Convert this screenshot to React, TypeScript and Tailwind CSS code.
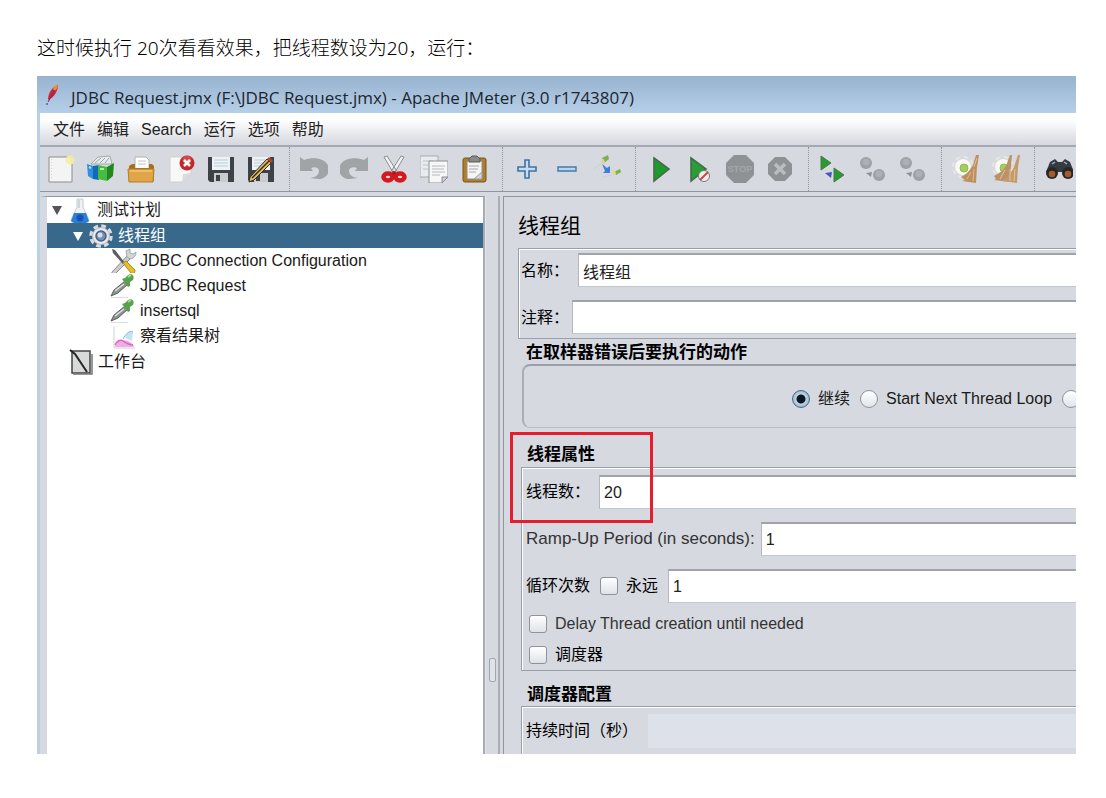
import React, { useState } from "react";
import clsx from "clsx";

const FIELD =
  "h-[34px] min-w-0 flex-1 border-t-2 border-l border-b border-t-[#a0a4aa] border-l-[#b4b8be] border-b-[#c3c7ce] bg-white text-base text-[#222] outline-none";
const CHECKBOX =
  "size-[18px] shrink-0 appearance-none rounded-[3px] border border-[#8d929c] bg-linear-to-b from-white to-[#dfe2e8] checked:to-[#7ea4bf]";
const RADIO =
  "size-[18px] shrink-0 appearance-none rounded-full border border-[#8d929c] bg-linear-to-b from-white to-[#e1e4ea] checked:border-[#4d6a82] checked:bg-[radial-gradient(circle,#0d1720_0_4px,#c3d6e6_5px,#8fb0c9_9px)]";

const Icon = ({ children }: { children: React.ReactNode }) => (
  <svg viewBox="0 0 28 28" className="size-7" aria-hidden="true">
    {children}
  </svg>
);

const Floppy = () => (
  <>
    <path d="M1 2h26v25H3l-2-2z" fill="#3e4248" />
    <path d="M5 2h18v13H5z" fill="#eef3f6" />
    <path d="M7 5h14M7 8h14M7 11h14" stroke="#b9ccd8" strokeWidth="1.2" />
    <path d="M7 18h14v9H7z" fill="#c9cccf" />
    <path d="M9 20h4v6H9z" fill="#3e4248" />
  </>
);

const Dots = () => (
  <>
    <circle cx="7" cy="8" r="6" fill="#9da0a4" />
    <circle cx="20" cy="20" r="6" fill="#9da0a4" />
    <circle cx="7" cy="7" r="3.5" fill="#acafb3" />
    <circle cx="20" cy="19" r="3.5" fill="#acafb3" />
    <path d="M7 18l6-1-1 5z" fill="#8f9296" />
  </>
);

const CogShape = () => (
  <>
    <circle cx="11" cy="12" r="9.5" fill="none" stroke="#e3e6e2" strokeWidth="3.5" strokeDasharray="4.4 3.06" />
    <circle cx="11" cy="12" r="8.5" fill="#f8f9f7" stroke="#d3d6d2" />
    <circle cx="12" cy="13" r="4" fill="#a5cf5d" stroke="#8fba57" />
  </>
);

const toolGroups = [
  [
    {
      name: "New",
      art: (
        <>
          <path d="M2 2h23v25H2z" fill="#f4f4f4" stroke="#8b8d90" />
          <path d="M4.5 4v21" stroke="#d5d5d5" strokeDasharray="1 2" />
          <circle cx="23" cy="5" r="4.5" fill="#f5efa0" opacity=".9" />
        </>
      ),
    },
    {
      name: "Templates",
      art: (
        <>
          <path d="M4 9l7-7 12-1 2 8z" fill="#e6ecec" stroke="#a2aaad" />
          <path d="M8 8l6-5M13 8l5-5M18 8l4-5" stroke="#98a4a8" />
          <path d="M0 9l6 2v13l-5-3z" fill="#2f8fe0" />
          <path d="M6 11l6-1v15l-6-1z" fill="#1768b4" />
          <path d="M11 10l9 2v14l-9-2z" fill="#45bd3f" />
          <path d="M20 12l7-4-1 13-6 5z" fill="#23871f" />
          <path d="M13 14h4M2 12l2 1" stroke="#b7efaa" strokeWidth="2" />
        </>
      ),
    },
    {
      name: "Open",
      art: (
        <>
          <path d="M8 2h11l3 3v11H8z" fill="#fff" stroke="#b0b0b0" />
          <path d="M11 6h8M11 9h8" stroke="#c4c4c4" />
          <path d="M2 11l3-2h3v4h14V9h3l2 2v15H2z" fill="#a8701e" />
          <path d="M1 14h26l-1 13H2z" fill="#e0a546" stroke="#b67c26" />
          <path d="M3 16h22" stroke="#f2c878" strokeWidth="1.5" />
        </>
      ),
    },
    {
      name: "Close",
      art: (
        <>
          <path d="M3 2h21v16l-9 9H3z" fill="#f8f8f8" stroke="#d0d0d0" />
          <path d="M15 27l1-8 8-1z" fill="#dcdcdc" />
          <circle cx="20" cy="8" r="7.5" fill="#c3262b" />
          <circle cx="20" cy="5" r="4.5" fill="#e0605f" opacity=".6" />
          <path d="M17 5l6 6M23 5l-6 6" stroke="#fff" strokeWidth="2.5" />
        </>
      ),
    },
    { name: "Save", art: <Floppy /> },
    {
      name: "Save As",
      art: (
        <>
          <Floppy />
          <path d="M3 22L20 4l4 4L7 25l-5 2z" fill="#e2bb62" stroke="#332d22" />
          <path d="M5 23L22 6" stroke="#2c2c2c" strokeWidth="1.5" />
          <path d="M20 4l2-2 4 4-2 2z" fill="#b5432d" />
        </>
      ),
    },
  ],
  [
    {
      name: "Undo",
      art: (
        <path d="M0 2l4 3c11-4 24-1 25 9 0 6-5 10-10 10l-9-1c7-1 9-4 9-7s-4-5-8-3l2 3H0z" fill="#a1a4a6" />
      ),
    },
    {
      name: "Redo",
      art: (
        <path d="M28 2l-4 3C13 1 0 4-1 14c0 6 5 10 10 10l9-1c-7-1-9-4-9-7s4-5 8-3l-2 3h13z" fill="#a1a4a6" />
      ),
    },
    {
      name: "Cut",
      art: (
        <>
          <path d="M4 2l3-1 11 17-4 1zM24 2l-3-1-11 17 4 1z" fill="#f1f1f1" stroke="#8c8f90" />
          <ellipse cx="8" cy="22" rx="4.5" ry="3.4" fill="none" stroke="#d3191f" strokeWidth="4.5" />
          <ellipse cx="20" cy="22" rx="4.5" ry="3.4" fill="none" stroke="#d3191f" strokeWidth="4.5" />
          <circle cx="14" cy="18" r="2" fill="#b21519" />
        </>
      ),
    },
    {
      name: "Copy",
      art: (
        <>
          <path d="M0 1h18v21H0z" fill="#e8ecf0" stroke="#a4abb2" />
          <path d="M3 6h10M3 10h5M3 14h5" stroke="#bcc2c8" />
          <path d="M9 6h19v16l-6 6H9z" fill="#f7f7f7" stroke="#8a8e92" />
          <path d="M12 11h13M12 14h12M12 17h13M12 20h8" stroke="#b5b8bb" />
          <path d="M22 28v-6h6z" fill="#cfd1d2" stroke="#8a8e92" />
        </>
      ),
    },
    {
      name: "Paste",
      art: (
        <>
          <rect x="3" y="3" width="23" height="24" rx="2" fill="#b07d2c" stroke="#7b551a" />
          <path d="M7 6h15v18H7z" fill="#f5f5f5" stroke="#8e8e8a" />
          <path d="M9 11h10M9 14h9M9 17h7" stroke="#aaa" />
          <path d="M14 24l8-7v7z" fill="#d5d5d5" stroke="#9b9b9b" />
          <path d="M9 4l3-3h5l3 3v3H9z" fill="#888b83" stroke="#585a54" />
        </>
      ),
    },
  ],
  [
    {
      name: "Expand All",
      art: <path d="M12 5h4v7h7v4h-7v7h-4v-7H5v-4h7z" fill="#c5dcf6" stroke="#41719f" strokeWidth="1.6" />,
    },
    {
      name: "Collapse All",
      art: <path d="M5 12h18v4H5z" fill="#b9d5f4" stroke="#4678a8" strokeWidth="1.4" />,
    },
    {
      name: "Toggle",
      art: (
        <>
          <path d="M1 14l8-6M9 22l10-2" stroke="#cdd0cf" />
          <path d="M9 3l6-3 1 4-5 4z" fill="#7fae4c" />
          <path d="M8 5l3-1 1 4-3 1z" fill="#d8d6a0" />
          <path d="M9 9l5 4 3-2v7h-7l2-2z" fill="#3d7fd6" />
          <path d="M21 17l6-3 1 3-5 3z" fill="#7fae4c" />
          <path d="M19 16l3-1 1 4-3 1z" fill="#e2d98a" />
        </>
      ),
    },
  ],
  [
    { name: "Start", art: <path d="M8 3l15 11L8 26z" fill="#1f9a2c" stroke="#476b4a" strokeWidth="1.6" /> },
    {
      name: "Start no pauses",
      art: (
        <>
          <path d="M5 3l15 11L5 26z" fill="#2a9e36" stroke="#476b4a" strokeWidth="1.6" />
          <circle cx="18" cy="21" r="5.5" fill="#f1eeee" stroke="#707c78" />
          <path d="M14 25l8-8" stroke="#d04444" strokeWidth="2" />
        </>
      ),
    },
    {
      name: "Stop",
      art: (
        <>
          <path d="M8 0h12l8 8v12l-8 8H8l-8-8V8z" fill="#8f9295" />
          <text x="14" y="17" textAnchor="middle" fontSize="9" fontWeight="700" fill="#a4a7aa">
            STOP
          </text>
        </>
      ),
    },
    {
      name: "Shutdown",
      art: (
        <>
          <path d="M9 2h10l7 7v10l-7 7H9l-7-7V9z" fill="#8f9295" />
          <path d="M9 9l10 10M19 9L9 19" stroke="#babdbf" strokeWidth="3.5" />
        </>
      ),
    },
  ],
  [
    {
      name: "Remote Start All",
      art: (
        <>
          <path d="M2 1l10 7-10 7zM15 13l10 7-10 7z" fill="#259c31" stroke="#4f7452" />
          <path d="M6 18l7-1-1 6z" fill="#4654c4" />
        </>
      ),
    },
    { name: "Remote Stop All", art: <Dots /> },
    { name: "Remote Shutdown All", art: <Dots /> },
  ],
  [
    {
      name: "Clear",
      art: (
        <>
          <CogShape />
          <path d="M24 0l3 0-2 12-1 16-14-2 3-1-4-3c6-3 9-7 12-12z" fill="#bf905f" />
          <path d="M22 14l-1 12M19 17l-4 7M25 3l-3 9" stroke="#dfbd92" />
        </>
      ),
    },
    {
      name: "Clear All",
      art: (
        <>
          <CogShape />
          <path d="M18 0l2 0-1 11-1 16-16-2 2-1-2-3c6-3 9-6 12-10z" fill="#bd9167" />
          <path d="M26 0l2 0-2 12-1 16-14-2c5-4 8-8 11-14z" fill="#c39a6b" />
          <path d="M13 15l-5 9M18 14v12M23 14l-1 12" stroke="#e0c49f" />
        </>
      ),
    },
  ],
  [
    {
      name: "Search",
      art: (
        <>
          <path d="M5 7l5-3 3 3h4l3-3 5 3 4 10H1z" fill="#363b41" />
          <circle cx="7" cy="18" r="6" fill="#24282c" />
          <circle cx="23" cy="18" r="6" fill="#24282c" />
          <circle cx="7" cy="19" r="3.3" fill="#a95a24" />
          <circle cx="23" cy="19" r="3.3" fill="#a95a24" />
          <path d="M7 9l3-2M19 7l3 2" stroke="#a9b1b9" strokeWidth="1.5" />
        </>
      ),
    },
  ],
];

const Pipette = () => (
  <Icon>
    <path d="M2 26h17" stroke="#d2d2d2" strokeWidth="1.5" />
    <path d="M2 24l3-6 11-9 3 3-10 9z" fill="#8d9190" stroke="#5c605f" />
    <path d="M6 19l9-7" stroke="#e0e4e4" strokeWidth="1.5" />
    <path d="M13 7l3-1 3-3c4-2 7 1 5 5l-3 2v4l-2 1z" fill="#58a14d" />
    <path d="M19 5l3-2" stroke="#a6dc96" strokeWidth="2" />
  </Icon>
);

const treeItems = [
  {
    label: "测试计划",
    row: "h-[26px] pl-[5px]",
    arrow: true,
    icon: (
      <Icon>
        <path d="M11 3h6v8l6 13q0 3-3 3H8q-3 0-3-3l6-13z" fill="#eef2f5" stroke="#c6ccd1" />
        <path d="M8 17h12l3 8-3 2H8l-3-2z" fill="#2b7fdb" />
        <circle cx="14" cy="22" r="3.5" fill="#1553b4" />
        <path d="M13 4v8" stroke="#aeb8c1" />
      </Icon>
    ),
  },
  {
    label: "线程组",
    row: "h-[25px] pl-[26px]",
    arrow: true,
    icon: (
      <Icon>
        <circle cx="14" cy="14" r="9.5" fill="none" stroke="#d9dcdf" strokeWidth="4.5" strokeDasharray="4.4 3.06" />
        <circle cx="14" cy="14" r="8.5" fill="#e8eaec" stroke="#b4b8bb" />
        <circle cx="14" cy="14" r="5" fill="#7590b5" stroke="#48607f" strokeWidth="1.5" />
        <circle cx="13" cy="13" r="2.5" fill="#cfe0f2" />
      </Icon>
    ),
  },
  {
    label: "JDBC Connection Configuration",
    row: "h-[25px] pl-[62px]",
    icon: (
      <Icon>
        <path d="M3 25L19 8l3 3L6 27q-4 1-3-2z" fill="#c9cccd" stroke="#8c9092" />
        <path d="M18 10l-1-6 4-2 0 4 3 1 3-2q0 6-6 7z" fill="#d3d6d7" stroke="#a5a8aa" />
        <path d="M3 2l3 1 10 13-2 1L4 6z" fill="#5b5f61" />
        <path d="M14 16l3-2 9 9q0 5-4 3z" fill="#e7bc2b" stroke="#b28b17" />
      </Icon>
    ),
  },
  { label: "JDBC Request", row: "h-[25px] pl-[62px]", icon: <Pipette /> },
  { label: "insertsql", row: "h-[25px] pl-[62px]", icon: <Pipette /> },
  {
    label: "察看结果树",
    row: "h-[26px] pl-[62px]",
    icon: (
      <Icon>
        <path d="M5 4v22h21" fill="none" stroke="#d5cfd7" />
        <path d="M6 25c1-5 4-8 8-7s5 0 7 2 4 3 4 5z" fill="#f0aee4" />
        <path d="M6 23c2-4 5-6 8-4s5 4 10 4" fill="none" stroke="#d968ca" strokeWidth="1.5" />
        <path d="M16 16c1-5 4-7 8-6l-1 9z" fill="#c5e1f6" />
        <path d="M14 17c3-5 6-9 10-7" fill="none" stroke="#86b1dc" />
      </Icon>
    ),
  },
  {
    label: "工作台",
    row: "h-[26px] pl-5",
    icon: (
      <Icon>
        <path d="M5 3h18v22H5z" fill="#d8dad9" stroke="#444" strokeWidth="1.5" />
        <path d="M6 26h19V6" fill="none" stroke="#777" strokeWidth="1.5" />
        <path d="M3 2l5 4 12 18" fill="none" stroke="#262626" strokeWidth="2" />
      </Icon>
    ),
  },
];

const menus = ["文件", "编辑", "Search", "运行", "选项", "帮助"];

export default function App() {
  const [selected, setSelected] = useState("线程组");

  return (
    <main className="min-h-screen bg-white pt-[34px] pr-[30px] pb-11 pl-[37px] font-['Liberation_Sans','Noto_Sans_CJK_SC',sans-serif] text-base text-black">
      <p className="mb-3.5 font-['Noto_Sans','Noto_Sans_CJK_SC',sans-serif] text-[19px] leading-7 font-light">
        这时候执行 20次看看效果，把线程数设为20，运行：
      </p>

      <div className="overflow-hidden bg-[#d6d9e0]">
        {/* Title bar */}
        <header className="flex h-[37px] items-center gap-2 bg-linear-to-b from-[#98b3cf] to-[#b6cfe9] pt-1.5 pl-1 font-['Open_Sans','Noto_Sans',sans-serif] text-[17px] whitespace-nowrap text-[#1c2630]">
          <svg viewBox="0 0 22 24" className="-mt-1.5 h-6 w-[22px] shrink-0" aria-hidden="true">
            <path d="M7 17C7 10 11 4 17 2c0 6-4 12-8 14z" fill="#cf2336" />
            <path d="M12 6c2-3 3-4 5-5 0 3-1 5-3 7z" fill="#ee8a3a" />
            <path d="M7 19l7-12" stroke="#713068" />
            <circle cx="6" cy="21" r="1" fill="#54658c" />
          </svg>
          <span>JDBC Request.jmx (F:\JDBC Request.jmx) - Apache JMeter (3.0 r1743807)</span>
        </header>

        <div className="border-l-3 border-[#b9d0e6]">
          {/* Menu */}
          <nav className="flex h-8 items-center gap-3 bg-linear-to-b from-white from-20% to-[#d5d8de] pt-px pl-[13px] text-[#222]">
            {menus.map((menu) => (
              <button key={menu} type="button">
                {menu}
              </button>
            ))}
          </nav>

          {/* Toolbar */}
          <div className="flex h-[47px] items-center overflow-hidden border-t-2 border-b border-t-[#a5a9b3] border-b-[#8f949e] pl-px" role="toolbar">
            {toolGroups.map((group, index) => (
              <div key={index} className="flex h-full shrink-0 items-center">
                {index > 0 && <span className="mr-1 ml-2 h-full border-l border-dotted border-[#8f949e]" />}
                {group.map((tool) => (
                  <button key={tool.name} type="button" aria-label={tool.name} className="flex w-10 justify-center">
                    <Icon>{tool.art}</Icon>
                  </button>
                ))}
              </div>
            ))}
          </div>

          <div className="flex pt-1">
            {/* Test plan tree */}
            <ul className="w-[445px] shrink-0 border-t border-r-2 border-l-7 border-t-[#9297a1] border-r-[#a7abb5] border-l-[#d6d9e0] bg-white">
              {treeItems.map((item) => (
                <li key={item.label}>
                  <button
                    type="button"
                    onClick={() => setSelected(item.label)}
                    className={clsx(
                      "flex w-full items-center overflow-hidden text-left whitespace-nowrap",
                      item.row,
                      selected === item.label ? "bg-[#39698a] text-white" : "text-[#1a1a1a]"
                    )}
                  >
                    {item.arrow && (
                      <svg viewBox="0 0 10 10" className="mr-1 size-2.5 shrink-0" aria-hidden="true">
                        <path d="M0 1h10L5 10z" fill={selected === item.label ? "#fff" : "#555"} />
                      </svg>
                    )}
                    <span className="mr-[3px] shrink-0">{item.icon}</span>
                    {item.label}
                  </button>
                </li>
              ))}
            </ul>

            {/* Splitter */}
            <div className="flex w-[15px] shrink-0 items-end justify-center border-r-2 border-l border-r-[#a9adb6] border-l-[#e4e6eb] pb-[72px]">
              <span className="h-6 w-[7px] rounded-xs border border-[#a0a5af] bg-[#dfe2e8]" />
            </div>

            {/* Thread group settings */}
            <div className="ml-[3px] min-w-0 flex-1 border-t border-l border-[#8f949e] pl-3.5 whitespace-nowrap">
              <h1 className="flex h-[51px] items-center pt-1.5 text-[21px] leading-none">线程组</h1>

              <div className="flex flex-col gap-[13px] border-t border-b border-l border-[#9a9faa] py-1 pl-0.5 shadow-[inset_1px_1px_0_#fff]">
                <div className="flex items-center">
                  <label htmlFor="group-name" className="mr-[9px] pt-0.5">名称：</label>
                  <input id="group-name" defaultValue="线程组" className={clsx(FIELD, "pl-1")} />
                </div>
                <div className="flex items-center">
                  <label htmlFor="group-comment" className="mr-[3px] pt-0.5">注释：</label>
                  <input id="group-comment" className={clsx(FIELD, "pl-1")} />
                </div>
              </div>

              <section className="pl-1">
                <h2 className="flex h-[25px] items-center pt-0.5 pl-1 text-[17px] font-bold">在取样器错误后要执行的动作</h2>
                <div className="flex h-16 items-center overflow-hidden rounded-l-lg border-t-2 border-b border-l-2 border-t-[#9a9faa] border-b-[#b9bdc6] border-l-[#a9adb7] pt-1 pl-[268px] text-[#1a1a1a]">
                  <label className="mr-2.5 flex shrink-0 items-center gap-2">
                    <input type="radio" name="on-error" defaultChecked className={RADIO} />
                    继续
                  </label>
                  <label className="mr-2.5 flex shrink-0 items-center gap-2">
                    <input type="radio" name="on-error" className={RADIO} />
                    Start Next Thread Loop
                  </label>
                  <input type="radio" name="on-error" aria-label="Stop Thread" className={RADIO} />
                </div>
              </section>

              <section className="relative mt-3 pl-[3px]">
                <h2 className="flex h-[27px] items-center pt-0.5 pl-1.5 text-[17px] font-bold">线程属性</h2>
                <div className="flex flex-col border-t border-b border-l border-[#9a9faa] pt-[7px] pl-1 shadow-[inset_1px_1px_0_#fff]">
                  <div className="mb-[13px] flex items-center">
                    <label htmlFor="threads" className="mr-[9px]">线程数：</label>
                    <input id="threads" defaultValue="20" className={clsx(FIELD, "pl-1")} />
                  </div>
                  <div className="mb-[13px] flex items-center">
                    <label htmlFor="ramp-up" className="mr-1.5 text-[17px] text-[#333]">Ramp-Up Period (in seconds):</label>
                    <input id="ramp-up" defaultValue="1" className={clsx(FIELD, "pl-1")} />
                  </div>
                  <div className="flex items-center">
                    <label htmlFor="loops" className="mr-2.5">循环次数</label>
                    <label className="mr-2.5 flex items-center gap-2">
                      <input type="checkbox" className={CHECKBOX} />
                      永远
                    </label>
                    <input id="loops" defaultValue="1" className={clsx(FIELD, "pl-1")} />
                  </div>
                  <label className="mt-1.5 flex h-[30px] items-center gap-2 pl-[3px] text-[#333]">
                    <input type="checkbox" className={CHECKBOX} />
                    Delay Thread creation until needed
                  </label>
                  <label className="flex h-[31px] items-center gap-2 pl-[3px]">
                    <input type="checkbox" className={CHECKBOX} />
                    调度器
                  </label>
                </div>
                {/* Highlight round the thread count */}
                <div className="pointer-events-none absolute -top-2 -left-2 h-[91px] w-[143px] border-3 border-[#e81c2c]" />
              </section>

              <section className="pt-2.5 pl-[3px]">
                <h2 className="flex h-[25px] items-center pt-0.5 pl-1.5 text-[17px] font-bold">调度器配置</h2>
                <div className="flex items-center border-t border-l border-[#9a9faa] pt-[7px] pb-1.5 pl-1 shadow-[inset_1px_1px_0_#fff]">
                  <label htmlFor="duration" className="mr-2.5">持续时间（秒）</label>
                  <input id="duration" disabled className="h-[34px] min-w-0 flex-1 bg-[#dde1e9]" />
                </div>
              </section>
            </div>
          </div>
        </div>
      </div>
    </main>
  );
}
